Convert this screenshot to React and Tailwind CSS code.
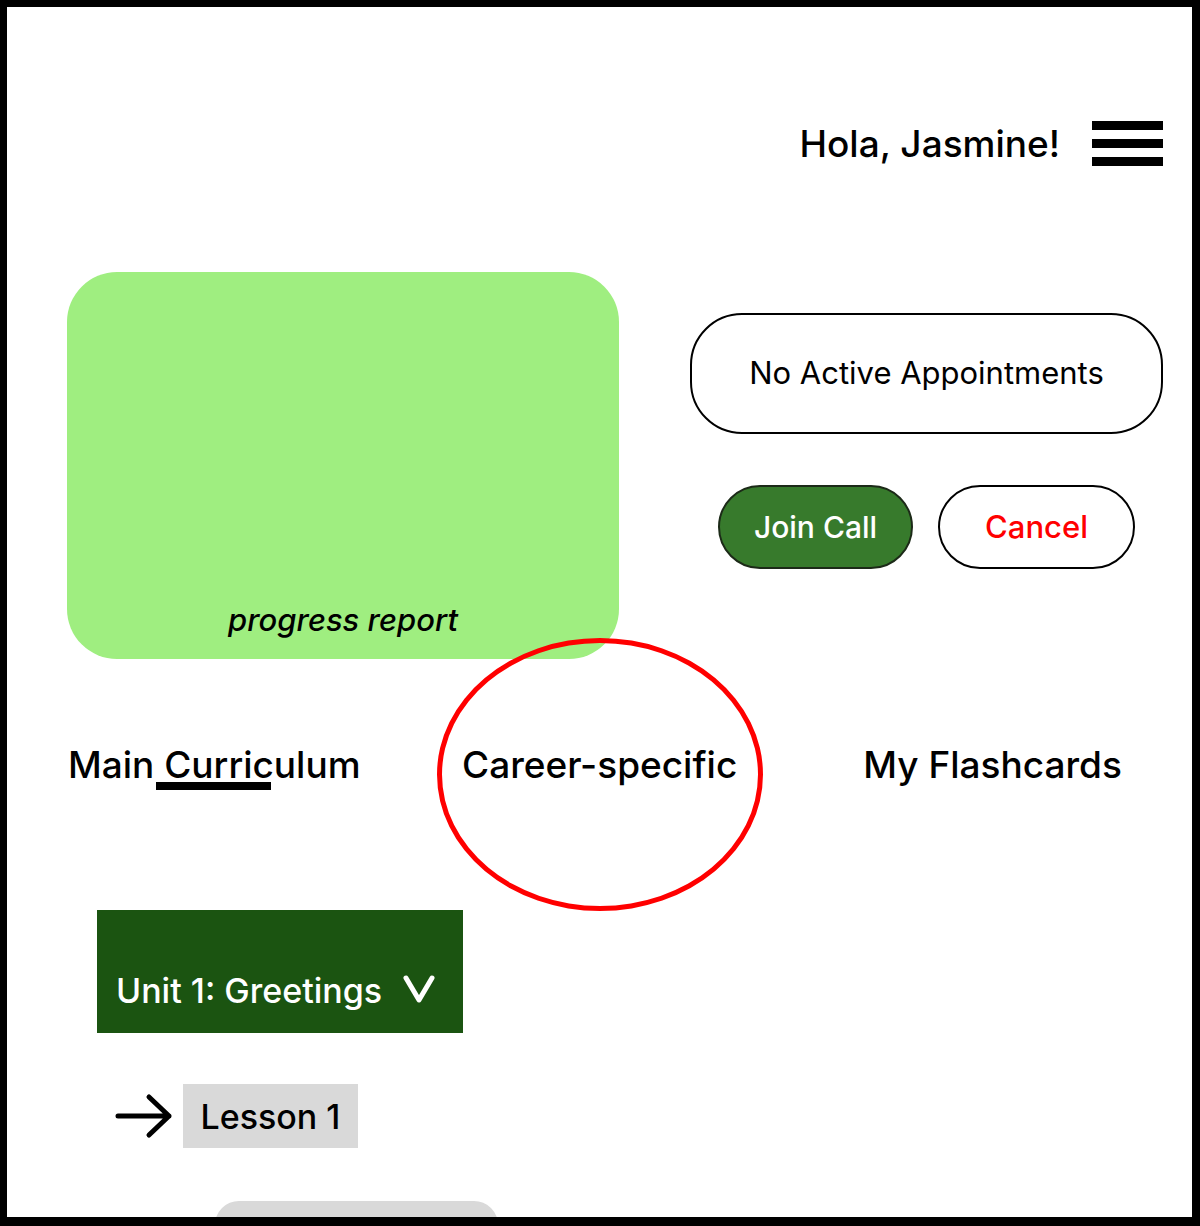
export default function App() {
  return (
    <div className="w-[1200px] h-[1226px] bg-black p-[7px_8px_9px_7px]" style={{ fontFamily: "Inter, 'Noto Sans', sans-serif" }}>
      <div className="relative w-full h-full bg-white overflow-hidden">
        {/* Header */}
        <header className="flex items-center justify-end pt-[114px] pr-[29px] gap-[32px]">
          <span className="text-[37px] font-medium text-black leading-none">Hola, Jasmine!</span>
          <div className="flex flex-col gap-[9px] w-[71px]">
            <span className="block h-[9px] bg-black" />
            <span className="block h-[9px] bg-black" />
            <span className="block h-[9px] bg-black" />
          </div>
        </header>

        {/* Progress + appointments */}
        <section className="flex mt-[106px] pl-[60px]">
          <div className="w-[552px] h-[387px] rounded-[50px] bg-[#9fee80] flex items-end justify-center pb-[16px]">
            <span className="text-[31px] italic font-medium text-black">progress report</span>
          </div>
          <div className="ml-[71px] pt-[41px] flex flex-col">
            <div className="w-[473px] h-[121px] rounded-[52px] border-2 border-black flex items-center justify-center text-[31px] text-black">
              No Active Appointments
            </div>
            <div className="flex gap-[25px] mt-[51px] pl-[28px]">
              <button className="w-[195px] h-[84px] rounded-full bg-[#377a2c] border-2 border-[#1c2a18] text-white text-[30px] font-medium">
                Join Call
              </button>
              <button className="w-[197px] h-[84px] rounded-full bg-white border-2 border-black text-[#ff0000] text-[31px] font-medium">
                Cancel
              </button>
            </div>
          </div>
        </section>

        {/* Tabs */}
        <nav className="flex items-center mt-[87px] pl-[61px] text-[37px] font-medium text-black leading-none whitespace-nowrap">
          <div className="relative w-[291px] shrink-0">
            <span>Main Curriculum</span>
            <span className="absolute left-[88px] top-[36px] w-[115px] h-[8px] bg-black" />
          </div>
          <span className="ml-[103px]">Career-specific</span>
          <span className="ml-[126px]">My Flashcards</span>
        </nav>

        {/* Annotation circle */}
        <div className="absolute left-[430px] top-[631px] w-[326px] h-[273px] rounded-[50%] border-[5px] border-[#ff0000]" />

        {/* Unit */}
        <div className="ml-[90px] mt-[127px] w-[366px] h-[123px] bg-[#1b5411] flex items-end pb-[17px] pl-[19px] gap-[20px] text-white text-[34px] font-medium">
          <span>Unit 1: Greetings</span>
          <svg width="34" height="30" viewBox="0 0 34 30" className="mb-[12px]" fill="none" stroke="white" strokeWidth="5" strokeLinecap="round" strokeLinejoin="round">
            <path d="M4 4 L17 26 L30 4" />
          </svg>
        </div>

        {/* Lesson row */}
        <div className="flex items-center ml-[108px] mt-[51px] gap-[10px]">
          <svg width="58" height="46" viewBox="0 0 58 46" fill="none" stroke="black" strokeWidth="5" strokeLinecap="round" strokeLinejoin="round">
            <path d="M3 23 H54 M34 4 L54 23 L34 42" />
          </svg>
          <div className="w-[175px] h-[64px] bg-[#d9d9d9] flex items-center justify-center text-[34px] font-medium text-black">
            Lesson 1
          </div>
        </div>

        {/* Next lesson (clipped) */}
        <div className="ml-[208px] mt-[53px] w-[283px] h-[60px] rounded-[24px] bg-[#d9d9d9] flex items-start justify-center pt-[10px] text-[32px] font-medium text-black">
          other lessons
        </div>
      </div>
    </div>
  );
}
